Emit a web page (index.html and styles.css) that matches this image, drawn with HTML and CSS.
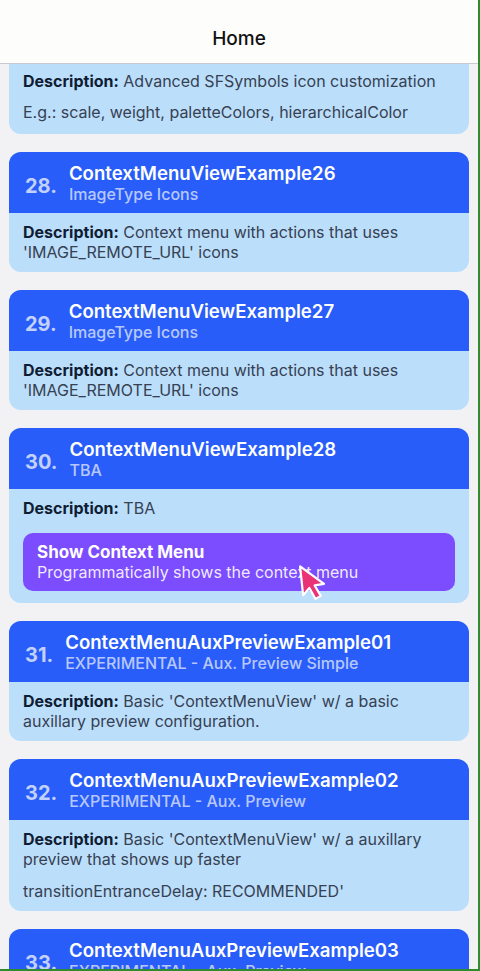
FILE: index.html
```html
<!DOCTYPE html>
<html>
<head>
<meta charset="utf-8">
<link rel="stylesheet" href="styles.css">
</head>
<body>
<div class="screen">
  <header class="navbar"><span class="nav-title">Home</span></header>
  <main class="content">
    <div class="list">
      <section class="card card-partial">
        <div class="card-body">
          <p><b>Description:</b> Advanced SFSymbols icon customization</p>
          <p>E.g.: scale, weight, paletteColors, hierarchicalColor</p>
        </div>
      </section>

      <section class="card">
        <div class="card-head">
          <span class="num">28.</span>
          <div class="titles">
            <div class="title">ContextMenuViewExample26</div>
            <div class="subtitle">ImageType Icons</div>
          </div>
        </div>
        <div class="card-body">
          <p><b>Description:</b> Context menu with actions that uses 'IMAGE_REMOTE_URL' icons</p>
        </div>
      </section>

      <section class="card">
        <div class="card-head">
          <span class="num">29.</span>
          <div class="titles">
            <div class="title">ContextMenuViewExample27</div>
            <div class="subtitle">ImageType Icons</div>
          </div>
        </div>
        <div class="card-body">
          <p><b>Description:</b> Context menu with actions that uses 'IMAGE_REMOTE_URL' icons</p>
        </div>
      </section>

      <section class="card">
        <div class="card-head">
          <span class="num">30.</span>
          <div class="titles">
            <div class="title">ContextMenuViewExample28</div>
            <div class="subtitle">TBA</div>
          </div>
        </div>
        <div class="card-body">
          <p><b>Description:</b> TBA</p>
          <div class="action-btn">
            <div class="action-title">Show Context Menu</div>
            <div class="action-sub">Programmatically shows the context menu</div>
            <svg class="cursor" width="30" height="42" viewBox="0 0 30 42">
              <path d="M3 2 L3 31 L10 24.5 L15 36 L20.5 33.5 L15.5 22.5 L25 22 Z" fill="#ea3377" stroke="#ffffff" stroke-width="2.2" stroke-linejoin="round"/>
            </svg>
          </div>
        </div>
      </section>

      <section class="card">
        <div class="card-head">
          <span class="num">31.</span>
          <div class="titles">
            <div class="title">ContextMenuAuxPreviewExample01</div>
            <div class="subtitle">EXPERIMENTAL - Aux. Preview Simple</div>
          </div>
        </div>
        <div class="card-body">
          <p><b>Description:</b> Basic 'ContextMenuView' w/ a basic auxillary preview configuration.</p>
        </div>
      </section>

      <section class="card">
        <div class="card-head">
          <span class="num">32.</span>
          <div class="titles">
            <div class="title">ContextMenuAuxPreviewExample02</div>
            <div class="subtitle">EXPERIMENTAL - Aux. Preview</div>
          </div>
        </div>
        <div class="card-body">
          <p><b>Description:</b> Basic 'ContextMenuView' w/ a auxillary preview that shows up faster</p>
          <p>transitionEntranceDelay: RECOMMENDED'</p>
        </div>
      </section>

      <section class="card">
        <div class="card-head">
          <span class="num">33.</span>
          <div class="titles">
            <div class="title">ContextMenuAuxPreviewExample03</div>
            <div class="subtitle">EXPERIMENTAL - Aux. Preview</div>
          </div>
        </div>
        <div class="card-body">
          <p><b>Description:</b> Basic 'ContextMenuView' w/ a auxillary preview</p>
        </div>
      </section>
    </div>
  </main>
</div>
</body>
</html>
```

FILE: styles.css
```css
* { box-sizing: border-box; }
html, body {
  margin: 0;
  padding: 0;
  background: #f2f2f4;
}
body {
  font-family: Inter, "Noto Sans", "Liberation Sans", sans-serif;
  color: #364152;
}
.screen {
  width: 480px;
  height: 971px;
  overflow: hidden;
  display: flex;
  flex-direction: column;
  border-right: 2px solid #2e8b2e;
  border-bottom: 2px solid #2e8b2e;
}
.navbar {
  flex: 0 0 64px;
  background: #fdfdfc;
  border-bottom: 1px solid #c9cad0;
  display: flex;
  align-items: center;
  justify-content: center;
  padding-top: 13px;
}
.nav-title {
  font-size: 19px;
  font-weight: 500;
  color: #111;
}
.content {
  flex: 1;
  overflow: hidden;
}
.list {
  display: flex;
  flex-direction: column;
  gap: 18px;
  padding: 0 9px;
}
.card {
  border-radius: 12px;
  overflow: hidden;
  background: #bbdefb;
}
.card-partial {
  border-radius: 0 0 12px 12px;
}
.card-partial .card-body {
  padding-top: 7px;
  padding-bottom: 12px;
  gap: 11px;
}
.card-head {
  background: #285df9;
  display: flex;
  align-items: center;
  gap: 12px;
  padding: 10px 16px 9px 16px;
}
.num {
  font-size: 20px;
  font-weight: 700;
  color: rgba(255, 255, 255, 0.72);
  padding-top: 6px;
}
.titles {
  display: flex;
  flex-direction: column;
}
.title {
  font-size: 18.6px;
  line-height: 22px;
  font-weight: 600;
  color: #ffffff;
}
.subtitle {
  font-size: 16px;
  line-height: 20px;
  font-weight: 500;
  color: rgba(255, 255, 255, 0.68);
}
.card-body {
  padding: 9px 14px 10px 14px;
  display: flex;
  flex-direction: column;
  gap: 12px;
}
.card-body p {
  margin: 0;
  font-size: 16px;
  line-height: 20px;
  color: #364152;
}
.card-body b {
  font-weight: 700;
  color: #0f1d33;
}
.action-btn {
  position: relative;
  margin-top: 3px;
  margin-bottom: 2px;
  background: #7c4dff;
  border-radius: 10px;
  padding: 9px 14px 9px 14px;
  display: flex;
  flex-direction: column;
}
.action-title {
  font-size: 17px;
  line-height: 20px;
  font-weight: 700;
  color: #ffffff;
}
.action-sub {
  font-size: 16px;
  line-height: 20px;
  color: rgba(255, 255, 255, 0.9);
}
.cursor {
  position: absolute;
  left: 276px;
  top: 30px;
  transform: rotate(-6deg);
}
```
